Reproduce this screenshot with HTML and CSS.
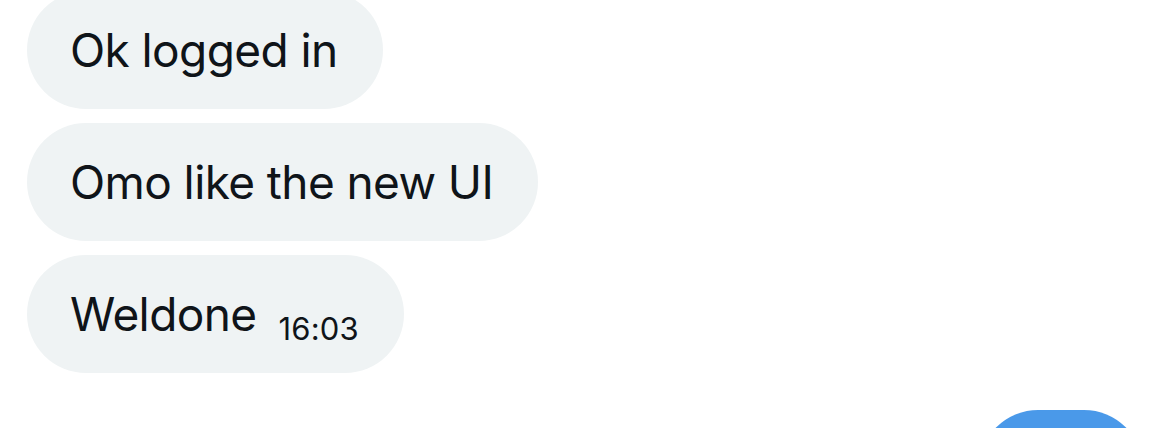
FILE: index.html
```html
<!DOCTYPE html>
<html lang="en">
<head>
    <meta charset="UTF-8">
    <meta name="viewport" content="width=device-width, initial-scale=1.0">
    <title>Messages</title>
    <link rel="stylesheet" href="styles.css">
</head>
<body>
    <div class="chat">
        <!-- incoming group -->
        <div class="group received">
            <div class="bubble">Ok logged in</div>
            <div class="bubble">Omo like the new UI</div>
            <div class="bubble">Weldone <span class="time">16:03</span></div>
        </div>
        <!-- outgoing group, cut off at the bottom -->
        <div class="group sent">
            <div class="bubble">&nbsp;</div>
        </div>
    </div>
</body>
</html>
```

FILE: styles.css
```css
* {
    margin: 0;
    padding: 0;
    box-sizing: border-box;
}

html,
body {
    height: 100%;
}

body {
    background-color: #fff;
    font-family: Inter, "Liberation Sans", sans-serif;
    color: #0f1419;
    overflow: hidden;
}

.chat {
    display: flex;
    flex-direction: column;
    gap: 37px;
    height: calc(100% + 9px);
    padding: 0 27px;
    margin-top: -9px;
    overflow: hidden;
}

.group {
    display: flex;
    flex-direction: column;
    gap: 14px;
    flex-shrink: 0;
}

.group.received {
    align-items: flex-start;
}

.group.sent {
    align-items: flex-end;
}

.bubble {
    display: flex;
    align-items: center;
    height: 118px;
    padding: 0 45px 0 43px;
    border-radius: 59px;
    background-color: #eff3f4;
    font-size: 46px;
    letter-spacing: -0.6px;
    white-space: nowrap;
}

.sent .bubble {
    width: 164px;
    background-color: #4a99e9;
    color: #fff;
}

.time {
    margin-left: 22px;
    margin-top: 28px;
    font-size: 31px;
    letter-spacing: 0.2px;
}
```
